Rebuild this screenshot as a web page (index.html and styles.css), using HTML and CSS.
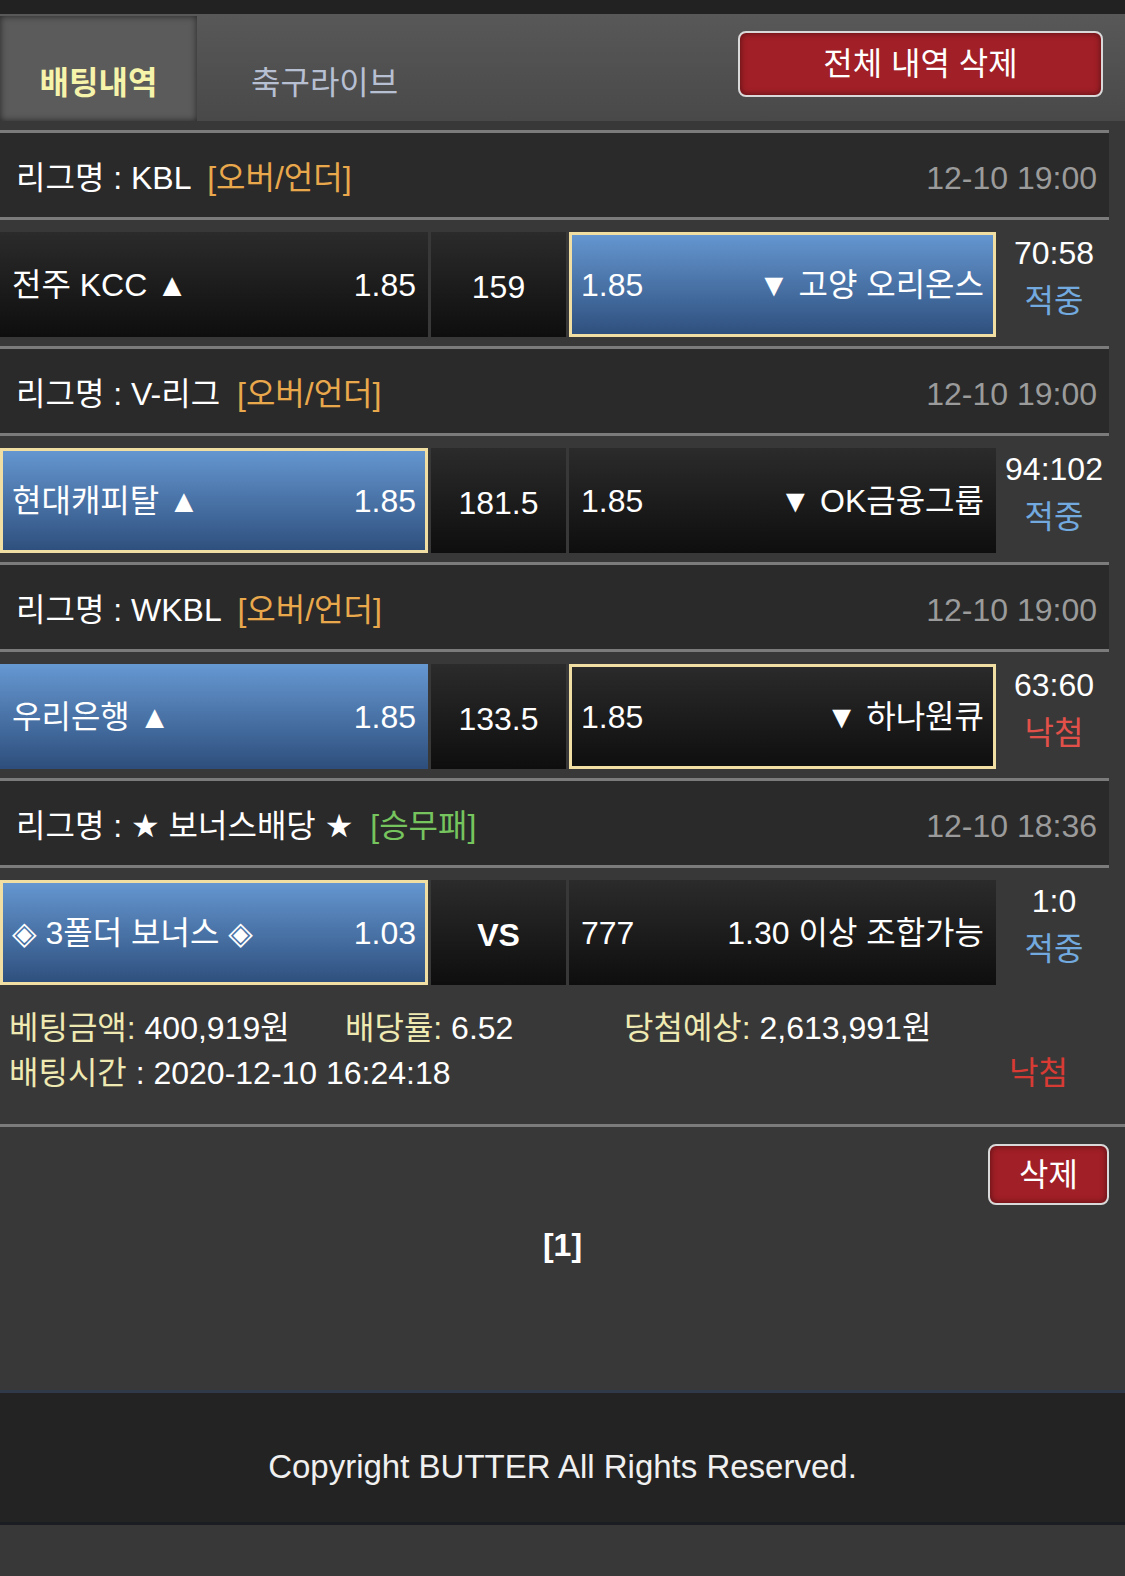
FILE: index.html
```html
<!DOCTYPE html>
<html lang="ko">
<head>
    <meta charset="UTF-8">
    <meta name="viewport" content="width=device-width, initial-scale=1.0">
    <title>배팅내역</title>
    <link rel="stylesheet" href="styles.css">
</head>
<body>
    <div class="top-strip"></div>

    <nav class="tab-bar">
        <div class="tab active">배팅내역</div>
        <div class="tab">축구라이브</div>
        <button class="btn-red btn-clear-all">전체 내역 삭제</button>
    </nav>

    <section class="bet-slip">
        <!-- KBL -->
        <div class="league-row">
            <div class="league-name">리그명 : KBL <span class="market ou">[오버/언더]</span></div>
            <div class="league-time">12-10 19:00</div>
        </div>
        <div class="game-row">
            <div class="pick side left"><span>전주 KCC ▲</span><span>1.85</span></div>
            <div class="pick mid">159</div>
            <div class="pick side right blue picked"><span>1.85</span><span>▼ 고양 오리온스</span></div>
            <div class="result"><span>70:58</span><span class="win">적중</span></div>
        </div>

        <!-- V-리그 -->
        <div class="league-row">
            <div class="league-name">리그명 : V-리그 <span class="market ou">[오버/언더]</span></div>
            <div class="league-time">12-10 19:00</div>
        </div>
        <div class="game-row">
            <div class="pick side left blue picked"><span>현대캐피탈 ▲</span><span>1.85</span></div>
            <div class="pick mid">181.5</div>
            <div class="pick side right"><span>1.85</span><span>▼ OK금융그룹</span></div>
            <div class="result"><span>94:102</span><span class="win">적중</span></div>
        </div>

        <!-- WKBL -->
        <div class="league-row">
            <div class="league-name">리그명 : WKBL <span class="market ou">[오버/언더]</span></div>
            <div class="league-time">12-10 19:00</div>
        </div>
        <div class="game-row">
            <div class="pick side left blue"><span>우리은행 ▲</span><span>1.85</span></div>
            <div class="pick mid">133.5</div>
            <div class="pick side right picked"><span>1.85</span><span>▼ 하나원큐</span></div>
            <div class="result"><span>63:60</span><span class="lose">낙첨</span></div>
        </div>

        <!-- 보너스 -->
        <div class="league-row">
            <div class="league-name">리그명 : ★ 보너스배당 ★ <span class="market wdl">[승무패]</span></div>
            <div class="league-time">12-10 18:36</div>
        </div>
        <div class="game-row">
            <div class="pick side left blue picked"><span>◈ 3폴더 보너스 ◈</span><span>1.03</span></div>
            <div class="pick mid vs">VS</div>
            <div class="pick side right"><span>777</span><span>1.30 이상 조합가능</span></div>
            <div class="result"><span>1:0</span><span class="win">적중</span></div>
        </div>

        <div class="slip-summary">
            <div class="sum-line">
                <div class="sum-bet"><span class="label">베팅금액:</span> 400,919원</div>
                <div class="sum-odds"><span class="label">배당률:</span> 6.52</div>
                <div><span class="label">당첨예상:</span> 2,613,991원</div>
            </div>
            <div class="sum-line between">
                <div><span class="label">배팅시간</span> : 2020-12-10 16:24:18</div>
                <div class="slip-lose">낙첨</div>
            </div>
        </div>
    </section>

    <div class="slip-actions">
        <button class="btn-red btn-delete">삭제</button>
    </div>

    <div class="pager">[1]</div>

    <footer>Copyright BUTTER All Rights Reserved.</footer>
</body>
</html>
```

FILE: styles.css
```css
body {
    margin: 0;
    background: #383838;
    color: #fff;
    font-family: "Liberation Sans", "DejaVu Sans", "Noto Sans CJK KR", sans-serif;
    font-size: 32px;
    line-height: 40px;
}

.top-strip {
    height: 14px;
    background: #222;
}

/* tabs */
.tab-bar {
    display: flex;
    height: 107px;
    background: linear-gradient(#585858, #494949);
}

.tab {
    display: flex;
    align-items: center;
    box-sizing: border-box;
    padding: 31px 0 0 54px;
    color: #b7bfd2;
}

.tab.active {
    width: 197px;
    margin-top: 2px;
    padding: 29px 0 0;
    justify-content: center;
    background: #5b5b5b;
    box-shadow: inset 0 0 7px rgba(0, 0, 0, 0.6);
    color: #f6f3aa;
    font-weight: bold;
}

.btn-red {
    padding: 0;
    background: #a11f26;
    border: 2px solid #d9d9d9;
    border-radius: 8px;
    box-shadow: inset 0 0 6px rgba(0, 0, 0, 0.5);
    color: #fff;
    font: inherit;
}

.btn-clear-all {
    width: 365px;
    height: 66px;
    margin: 17px 22px 0 auto;
}

/* bet slip */
.bet-slip {
    margin-top: 9px;
}

.league-row {
    display: flex;
    justify-content: space-between;
    align-items: center;
    box-sizing: border-box;
    height: 90px;
    margin-right: 16px;
    padding: 6px 12px 0 16px;
    background: #2a2a2a;
    border-top: 3px solid #7b7b7b;
    border-bottom: 3px solid #7b7b7b;
}

.market {
    margin-left: 8px;
}

.market.ou {
    color: #e9a84c;
}

.market.wdl {
    color: #76c45e;
}

.league-time {
    color: #9b9b9b;
}

.game-row {
    display: flex;
    gap: 3px;
    margin-right: 16px;
    padding: 12px 0 9px;
}

.pick {
    display: flex;
    align-items: center;
    justify-content: space-between;
    box-sizing: border-box;
    height: 105px;
    padding: 0 12px;
    background: linear-gradient(#2b2b2b, #0e0e0e);
}

.pick.left {
    width: 428px;
}

.pick.right {
    width: 427px;
}

.pick.mid {
    width: 135px;
    justify-content: center;
    padding: 4px 0 0;
}

.pick.vs {
    font-weight: bold;
}

.pick.blue {
    background: linear-gradient(#6698d2, #2d4e7c);
}

.pick.picked {
    box-shadow: inset 0 0 0 3px #f1dea2;
}

.result {
    flex: 1;
    display: flex;
    flex-direction: column;
    align-items: center;
    margin-top: -3px;
    line-height: 48px;
}

.win {
    color: #72a9df;
}

.lose {
    color: #e2504a;
}

/* summary */
.slip-summary {
    padding: 12px 57px 28px 9px;
    line-height: 45px;
    border-bottom: 3px solid #7b7b7b;
}

.sum-line {
    display: flex;
}

.sum-line.between {
    justify-content: space-between;
}

.sum-bet {
    width: 336px;
}

.sum-odds {
    width: 279px;
}

.label {
    color: #efe9b2;
}

.slip-lose {
    color: #d83b34;
}

.slip-actions {
    display: flex;
    justify-content: flex-end;
    padding: 17px 16px 0 0;
}

.btn-delete {
    width: 121px;
    height: 61px;
}

.pager {
    margin-top: 20px;
    line-height: 40px;
    text-align: center;
    font-weight: bold;
}

footer {
    display: flex;
    align-items: center;
    justify-content: center;
    box-sizing: border-box;
    height: 135px;
    margin-top: 125px;
    padding-top: 18px;
    background: #232323;
    border-top: 3px solid #2f3947;
    border-bottom: 3px solid #1a1d21;
    color: #f0f0f0;
    font-size: 33px;
}
```
